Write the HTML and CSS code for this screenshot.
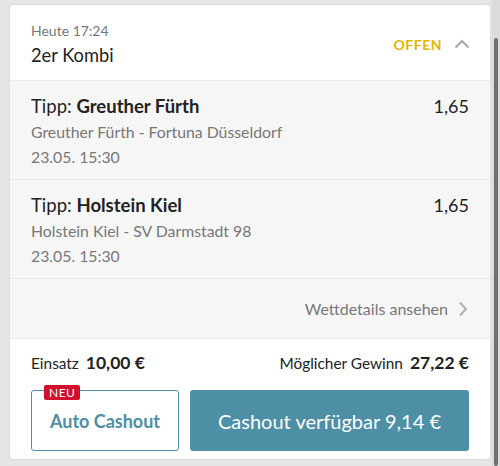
FILE: index.html
```html
<!DOCTYPE html>
<html lang="de">
<head>
    <meta charset="UTF-8">
    <meta name="viewport" content="width=device-width, initial-scale=1.0">
    <title>2er Kombi</title>
    <link rel="stylesheet" href="styles.css">
</head>
<body>

<div class="page">
    <div class="card">
        <header class="bet-head">
            <div>
                <div class="bet-time">Heute 17:24</div>
                <div class="bet-type">2er Kombi</div>
            </div>
            <div class="bet-status">
                <span class="status-label">OFFEN</span>
                <svg class="chev-up" width="16" height="10" viewBox="0 0 16 10"><path d="M1.5 8.5 L8 2 L14.5 8.5" fill="none" stroke="#a8a8a8" stroke-width="2"/></svg>
            </div>
        </header>

        <div class="selection">
            <div class="sel-main">
                <div class="sel-title">Tipp: <b>Greuther Fürth</b></div>
                <div class="sel-sub">Greuther Fürth - Fortuna Düsseldorf</div>
                <div class="sel-sub">23.05. 15:30</div>
            </div>
            <div class="sel-odds">1,65</div>
        </div>

        <div class="selection">
            <div class="sel-main">
                <div class="sel-title">Tipp: <b>Holstein Kiel</b></div>
                <div class="sel-sub">Holstein Kiel - SV Darmstadt 98</div>
                <div class="sel-sub">23.05. 15:30</div>
            </div>
            <div class="sel-odds">1,65</div>
        </div>

        <div class="details-link">
            <span>Wettdetails ansehen</span>
            <svg width="10" height="16" viewBox="0 0 10 16"><path d="M2 1.5 L8 8 L2 14.5" fill="none" stroke="#b0b0b0" stroke-width="2"/></svg>
        </div>

        <div class="bet-foot">
            <div class="amounts">
                <div>Einsatz <b>10,00 €</b></div>
                <div>Möglicher Gewinn <b>27,22 €</b></div>
            </div>
            <div class="actions">
                <button class="btn-auto">
                    <span class="badge">NEU</span>
                    Auto Cashout
                </button>
                <button class="btn-cashout">Cashout verfügbar 9,14 €</button>
            </div>
        </div>
    </div>
    <div class="scrollbar"><div class="thumb"></div></div>
</div>

</body>
</html>
```

FILE: styles.css
```css
body {
    margin: 0;
    padding: 0;
    background-color: #e6e6e6;
    font-family: 'Lato', 'Liberation Sans', sans-serif;
    color: #222;
}

.page {
    display: flex;
    height: 466px;
    overflow: hidden;
}

.card {
    width: 480px;
    margin: 5px 0 0 10px;
    background-color: #fff;
    border-radius: 4px;
    box-shadow: 0 0 2px rgba(0, 0, 0, 0.12);
    align-self: flex-start;
    overflow: hidden;
}

.scrollbar {
    width: 8px;
    margin-left: 2px;
    background-color: #dcdcdc;
    padding-top: 38px;
    box-sizing: border-box;
}

.thumb {
    width: 4px;
    margin-left: 2px;
    height: 100%;
    background-color: #707070;
    border-radius: 2px;
}

.bet-head {
    display: flex;
    justify-content: space-between;
    align-items: center;
    padding: 17px 20px 12px 21px;
    border-bottom: 1px solid #e9e9e9;
}

.bet-time {
    font-size: 14px;
    color: #777;
    line-height: 18px;
}

.bet-type {
    font-size: 18.3px;
    line-height: 26px;
    margin-top: 2px;
}

.bet-status {
    display: flex;
    align-items: center;
    gap: 12px;
    margin-top: -2px;
}

.status-label {
    font-size: 14px;
    font-weight: bold;
    color: #e2b600;
    letter-spacing: 0.5px;
}

.selection {
    display: flex;
    justify-content: space-between;
    background-color: #f6f6f6;
    padding: 12px 21px 10px 21px;
    border-bottom: 1px solid #e6e6e6;
}

.sel-title {
    font-size: 18.5px;
    line-height: 26px;
}

.sel-sub {
    font-size: 15.8px;
    color: #777;
    line-height: 25px;
}

.sel-odds {
    font-size: 18px;
    line-height: 26px;
}

.details-link {
    display: flex;
    justify-content: flex-end;
    align-items: center;
    gap: 10px;
    background-color: #f6f6f6;
    padding: 20px 22px 20px 21px;
    font-size: 16px;
    color: #777;
    border-bottom: 1px solid #e9e9e9;
}

.bet-foot {
    padding: 13px 21px 8px 21px;
}

.amounts {
    display: flex;
    justify-content: space-between;
    font-size: 15.4px;
    line-height: 22px;
}

.amounts b {
    font-size: 17.5px;
    margin-left: 3px;
}

.actions {
    display: flex;
    gap: 11px;
    margin-top: 16px;
}

button {
    font-family: inherit;
    height: 61px;
    border-radius: 3px;
    cursor: pointer;
}

.btn-auto {
    position: relative;
    width: 148px;
    background-color: #fff;
    border: 1px solid #4e8ea4;
    color: #4e8ea4;
    font-size: 18px;
    font-weight: bold;
}

.badge {
    position: absolute;
    top: -6px;
    left: 12px;
    background-color: #d0102c;
    color: #fff;
    font-size: 12px;
    font-weight: normal;
    line-height: 15px;
    padding: 0 5px;
    border-radius: 2px;
    letter-spacing: 0.5px;
}

.btn-cashout {
    flex: 1;
    background-color: #4d8fa5;
    border: none;
    color: #fff;
    font-size: 20px;
}
```
